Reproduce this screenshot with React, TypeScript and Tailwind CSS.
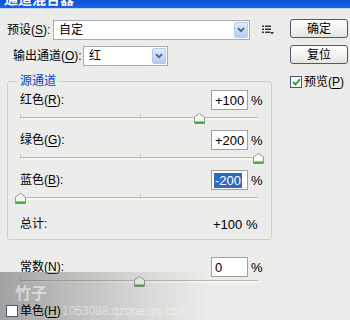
import React from 'react';

const FONT = "font-['Liberation_Sans','Noto_Sans_CJK_SC',sans-serif]";

// underlined mnemonic letter
const U = ({ c }: { c: string }) => <span className="underline underline-offset-[2px]">{c}</span>;

const Arrow = () => (
  <div className="flex h-[16px] w-[14px] items-center justify-center rounded-[2px] border border-[#b4c8f4] bg-gradient-to-b from-[#e2ebfe] to-[#b7cbf5]">
    <svg width="8" height="6" viewBox="0 0 8 6">
      <path d="M1 1.2 L4 4.2 L7 1.2" fill="none" stroke="#4d6185" strokeWidth="1.8" />
    </svg>
  </div>
);

const Select = ({ value, className }: { value: string; className: string }) => (
  <div className={`flex h-[20px] items-center justify-between border border-[#a5acb5] bg-white pl-[5px] pr-[1px] ${className}`}>
    <span className="text-[12px] leading-none">{value}</span>
    <Arrow />
  </div>
);

const NumBox = ({ value, selected }: { value: string; selected?: boolean }) => (
  <div className="flex h-[20px] w-[37px] items-center border border-[#a0a0a0] bg-white pl-[2px] text-[13px] leading-none">
    {selected ? <span className="bg-[#316ac5] px-[1px] py-[1px] text-white">{value}</span> : <span className="px-[1px]">{value}</span>}
  </div>
);

const Thumb = () => (
  <svg width="11" height="11" viewBox="0 0 11 11">
    <path d="M0.5 4 L5.5 0.5 L10.5 4 L10.5 10.5 L0.5 10.5 Z" fill="#fbfbf8" stroke="#8c9a8c" />
    <rect x="1" y="8.5" width="9" height="1.8" fill="#3aa33a" />
  </svg>
);

// value range -200 .. 200 across the track
const Slider = ({ value, className }: { value: number; className: string }) => {
  const left = ((value + 200) / 400) * 238;
  return (
    <div className={`relative h-[20px] w-[238px] ${className}`}>
      <div className="absolute left-0 top-[7px] h-[3px] w-full border-t border-[#b8b8b0] bg-[#f7f7f3]" />
      <div className="absolute left-0 top-[4px] h-[5px] w-px bg-[#c4c4bc]" />
      <div className="absolute left-[120px] top-[4px] h-[5px] w-px bg-[#c4c4bc]" />
      <div className="absolute top-[3px]" style={{ left: left - 5 }}>
        <Thumb />
      </div>
    </div>
  );
};

const Channel = ({ label, value, pos, selected }: { label: React.ReactNode; value: string; pos: number; selected?: boolean }) => (
  <div>
    <div className="flex h-[20px] items-center pl-[12px]">
      <span className="w-[191px] text-[12px] leading-none">{label}</span>
      <NumBox value={value} selected={selected} />
      <span className="ml-[3px] text-[13px] leading-none">%</span>
    </div>
    <Slider value={pos} className="ml-[12px]" />
  </div>
);

const CheckBox = ({ checked }: { checked?: boolean }) => (
  <div className="flex h-[12px] w-[12px] items-center justify-center border border-[#4a5a6a] bg-white">
    {checked && (
      <svg width="9" height="8" viewBox="0 0 9 8">
        <path d="M1 4 L3.5 6.5 L8 1.2" fill="none" stroke="#21a121" strokeWidth="1.8" />
      </svg>
    )}
  </div>
);

const Button = ({ children }: { children: React.ReactNode }) => (
  <div className="flex h-[19px] w-[58px] items-center justify-center rounded-[3px] border border-[#4c5a6c] bg-gradient-to-b from-[#ffffff] to-[#e6e6e0] text-[12px] leading-none">
    {children}
  </div>
);

export default function App() {
  return (
    <div className={`relative h-[320px] w-[350px] overflow-hidden bg-[#ececea] text-black ${FONT}`}>
      {/* title bar, mostly cut off */}
      <div className="h-[9px] overflow-hidden border-b border-[#c9d6f2] bg-gradient-to-b from-[#0a4fd6] to-[#1b63e6]">
        <div className="-mt-[9px] pl-[4px] text-[14px] font-bold leading-[16px] text-white">通道混合器</div>
      </div>

      <div className="flex">
        <div className="w-[290px] pt-[11px]">
          <div className="flex h-[20px] items-center pl-[7px]">
            <span className="w-[46px] text-[12px] leading-none">预设(<U c="S" />):</span>
            <Select value="自定" className="w-[197px]" />
            <svg className="ml-[12px]" width="12" height="10" viewBox="0 0 12 10">
              <rect x="0" y="0.5" width="2" height="1.5" fill="#333" />
              <rect x="3" y="0.5" width="6" height="1.5" fill="#333" />
              <rect x="0" y="3.5" width="2" height="1.5" fill="#333" />
              <rect x="3" y="3.5" width="6" height="1.5" fill="#333" />
              <rect x="0" y="6.5" width="2" height="1.5" fill="#333" />
              <rect x="3" y="6.5" width="5" height="1.5" fill="#333" />
              <path d="M8 7 L12 7 L10 9.5 Z" fill="#333" />
            </svg>
          </div>

          <div className="mt-[6px] flex h-[20px] items-center pl-[13px]">
            <span className="w-[70px] text-[12px] leading-none">输出通道(<U c="O" />):</span>
            <Select value="红" className="w-[85px]" />
          </div>

          <fieldset className="ml-[7px] mt-[7px] h-[167px] w-[265px] rounded-[3px] border border-[#d0d0bf] p-0">
            <legend className="ml-[9px] px-[3px] text-[12px] leading-[16px] text-[#0046d5]">源通道</legend>
            <div className="pt-[1px]">
              <Channel label={<>红色(<U c="R" />):</>} value="+100" pos={100} />
              <Channel label={<>绿色(<U c="G" />):</>} value="+200" pos={200} />
              <Channel label={<>蓝色(<U c="B" />):</>} value="-200" pos={-200} selected />
              <div className="mt-[4px] flex h-[20px] items-center pl-[12px]">
                <span className="w-[193px] text-[12px] leading-none">总计:</span>
                <span className="text-[13px] leading-none">+100 %</span>
              </div>
            </div>
          </fieldset>

          <div className="mt-[17px] flex h-[20px] items-center pl-[20px]">
            <span className="w-[191px] text-[12px] leading-none">常数(<U c="N" />):</span>
            <NumBox value="0" />
            <span className="ml-[3px] text-[13px] leading-none">%</span>
          </div>
          <Slider value={0} className="-mt-[4px] ml-[20px]" />
        </div>

        <div className="flex flex-col pt-[10px]">
          <Button>确定</Button>
          <div className="mt-[7px]">
            <Button>复位</Button>
          </div>
          <div className="mt-[12px] flex items-center gap-[2px]">
            <CheckBox checked />
            <span className="text-[12px] leading-none">预览(<U c="P" />)</span>
          </div>
        </div>
      </div>

      <div className="relative z-10 mt-[12px] flex items-center gap-[2px] pl-[6px]">
        <CheckBox />
        <span className="text-[12px] leading-none">单色(<U c="H" />)</span>
      </div>

      {/* watermark shadow over the bottom */}
      <div className="pointer-events-none absolute bottom-0 left-0 h-[48px] w-full bg-gradient-to-r from-[rgba(90,90,90,0.5)] via-[rgba(130,130,130,0.2)] via-40% to-transparent to-60%" />
      <div className="pointer-events-none absolute left-[15px] top-[286px] text-[16px] font-bold leading-none text-[rgba(255,255,255,0.55)]">竹子</div>
      <div className="pointer-events-none absolute left-[62px] top-[305px] text-[12px] leading-none text-[rgba(255,255,255,0.45)]">1053088.qzone.qq.com</div>
    </div>
  );
}
